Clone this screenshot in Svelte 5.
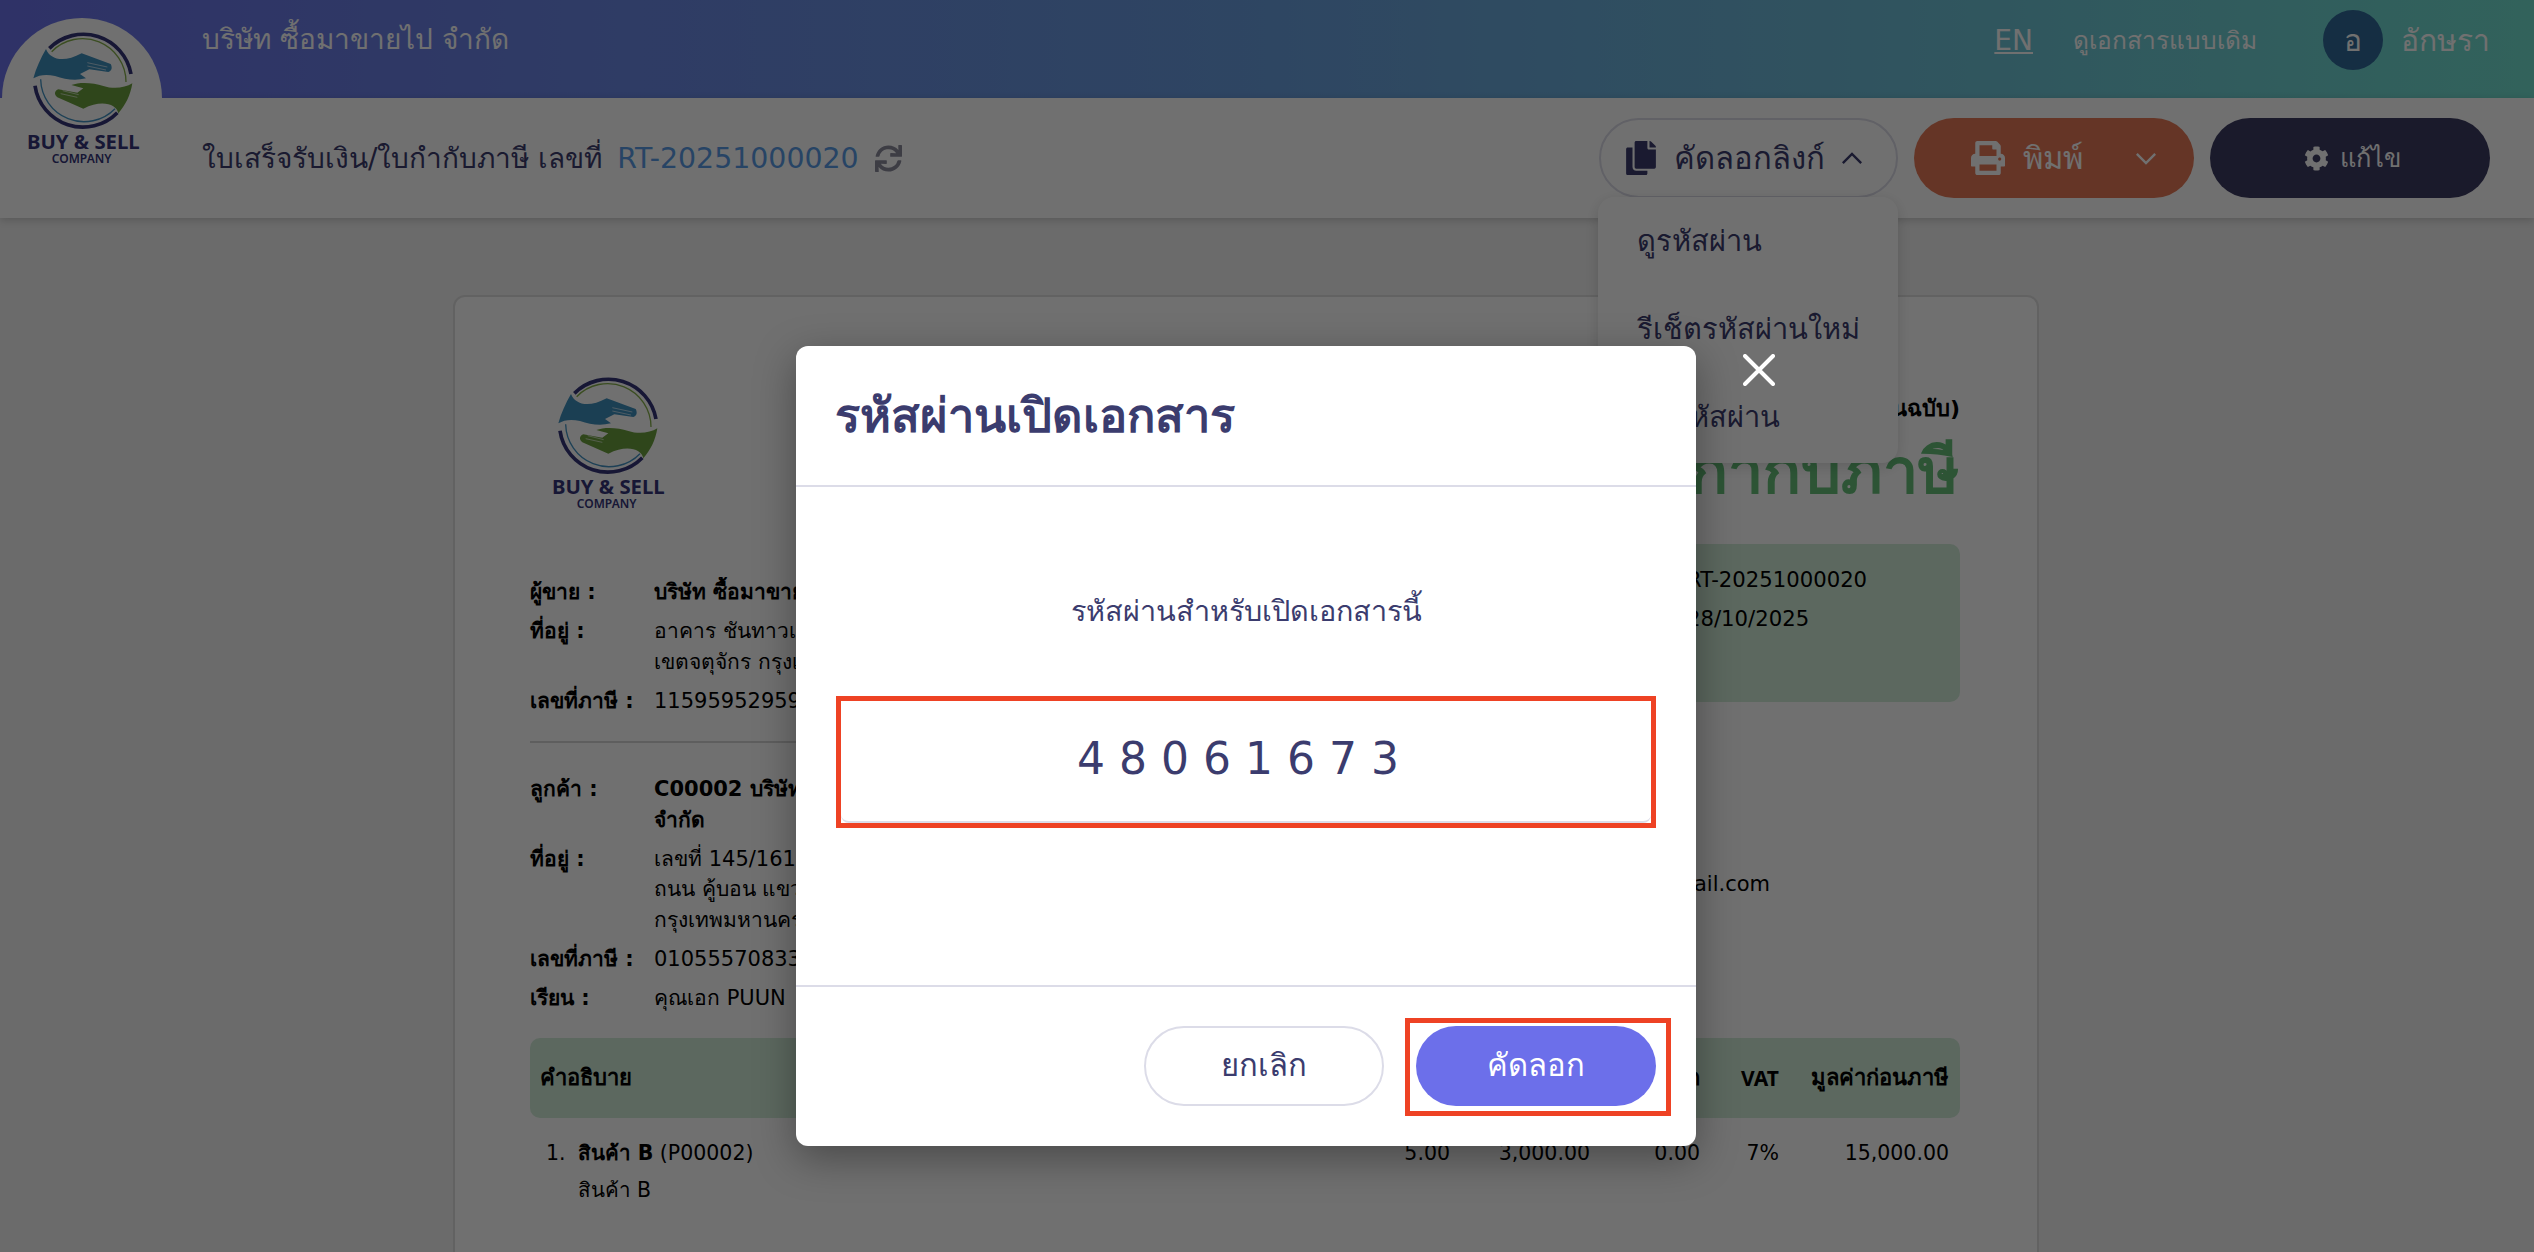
<script>
  const sellerRows = [
    { label: 'ผู้ขาย :', lines: ['บริษัท ซื้อมาขายไป จำกัด'], bold: true },
    { label: 'ที่อยู่ :', lines: ['อาคาร ชันทาวเวอร์ ถนนวิภาวดีรังสิต', 'เขตจตุจักร กรุงเทพมหานคร 10900'] },
    { label: 'เลขที่ภาษี :', lines: ['1159595295912'] }
  ];
  const buyerRows = [
    { label: 'ลูกค้า :', lines: ['C00002 บริษัท ทดสอบการขาย', 'จำกัด'], bold: true },
    { label: 'ที่อยู่ :', lines: ['เลขที่ 145/161 หมู่บ้านทดสอบ', 'ถนน คู้บอน  แขวงรามอินทรา', 'กรุงเทพมหานคร 10230'] },
    { label: 'เลขที่ภาษี :', lines: ['0105557083312'] },
    { label: 'เรียน :', lines: ['คุณเอก PUUN'] }
  ];
</script>

{#snippet logo()}
  <svg class="logo" viewBox="0 0 600 570" aria-label="Buy and Sell Company">
    <path d="M148 145A145 145 0 0 1 393 222" class="ring dark" />
    <path d="M105 257A145 145 0 0 0 352 338" class="ring dark" />
    <path d="M155 155A130 130 0 0 1 378 246" class="ring thin green" />
    <path d="M122 238A130 130 0 0 0 345 326" class="ring thin blue" />
    <path d="M100 235C108 205 122 175 138 147C150 178 190 190 245 160L332 192C338 203 335 213 325 216L268 208L240 222L258 235C225 243 195 238 165 228C140 222 118 224 100 235Z" fill="#3f8fbd" />
    <path d="M397 250C392 285 375 318 355 340C350 312 305 298 250 326L172 292C160 282 165 272 175 268L232 278L250 265L214 255C240 245 280 248 310 258C340 268 375 264 397 250Z" fill="#6ba03e" />
    <path d="M262 188L322 201M262 198L318 210M182 281L232 292M188 272L236 284" class="fingers" />
    <text x="250" y="447" text-anchor="middle" class="l1">BUY &amp; SELL</text>
    <text x="245" y="489" text-anchor="middle" class="l2">COMPANY</text>
  </svg>
{/snippet}

{#snippet infoRow(row)}
  <div class="info-row">
    <span class="info-label">{row.label}</span>
    <span class="info-value" class:strong={row.bold}>
      {#each row.lines as line}<span class="line">{line}</span>{/each}
    </span>
  </div>
{/snippet}

<div class="screen">
  <header class="topbar">
    <div class="company">บริษัท ซื้อมาขายไป จำกัด</div>
    <div class="top-right">
      <a class="lang" href="#en">EN</a>
      <span class="old-doc">ดูเอกสารแบบเดิม</span>
      <span class="avatar">อ</span>
      <span class="user">อักษรา</span>
    </div>
  </header>

  <div class="logo-badge">{@render logo()}</div>

  <section class="subbar">
    <div class="doc-title">
      <span>ใบเสร็จรับเงิน/ใบกำกับภาษี เลขที่</span>
      <span class="doc-no">RT-20251000020</span>
      <svg class="sync" viewBox="0 0 512 512"><path d="M440.65 12.57l4 82.77A247.16 247.16 0 0 0 255.83 8C134.73 8 33.91 94.92 12.29 209.82A12 12 0 0 0 24.09 224h49.05a12 12 0 0 0 11.67-9.26 175.91 175.91 0 0 1 317-56.94l-101.46-4.86a12 12 0 0 0-12.57 12v47.41a12 12 0 0 0 12 12H500a12 12 0 0 0 12-12V12a12 12 0 0 0-12-12h-47.37a12 12 0 0 0-11.98 12.57zM255.83 432a175.61 175.61 0 0 1-146-77.8l101.8 4.87a12 12 0 0 0 12.57-12v-47.4a12 12 0 0 0-12-12H12a12 12 0 0 0-12 12V500a12 12 0 0 0 12 12h47.35a12 12 0 0 0 12-12.6l-4.15-82.57A247.17 247.17 0 0 0 255.83 504c121.11 0 221.93-86.92 243.55-201.82a12 12 0 0 0-11.8-14.18h-49.05a12 12 0 0 0-11.67 9.26A175.86 175.86 0 0 1 255.83 432z"/></svg>
    </div>
    <div class="actions">
      <div class="copy-wrap">
        <button class="btn copy-link">
          <svg class="ic-copy" viewBox="0 0 448 512"><path d="M320 448v40c0 13.255-10.745 24-24 24H24c-13.255 0-24-10.745-24-24V120c0-13.255 10.745-24 24-24h72v296c0 30.879 25.121 56 56 56h168zm0-344V0H152c-13.255 0-24 10.745-24 24v368c0 13.255 10.745 24 24 24h272c13.255 0 24-10.745 24-24V128H344c-13.2 0-24-10.8-24-24zm120.971-31.029L375.029 7.029A24 24 0 0 0 358.059 0H352v96h96v-6.059a24 24 0 0 0-7.029-16.97z"/></svg>
          <span>คัดลอกลิงก์</span>
          <svg class="chev" viewBox="0 0 24 14"><path d="M2 12L12 2L22 12"/></svg>
        </button>
        <div class="dropdown">
          <div class="dd-item">ดูรหัสผ่าน</div>
          <div class="dd-item">รีเช็ตรหัสผ่านใหม่</div>
          <div class="dd-item">ปิดรหัสผ่าน</div>
        </div>
      </div>
      <button class="btn print">
        <svg class="ic-print" viewBox="0 0 512 512"><path d="M448 192V77.25c0-8.49-3.37-16.62-9.37-22.63L393.37 9.37c-6-6-14.14-9.37-22.63-9.37H96C78.33 0 64 14.33 64 32v160c-35.35 0-64 28.65-64 64v112c0 8.84 7.16 16 16 16h48v96c0 17.67 14.33 32 32 32h320c17.67 0 32-14.33 32-32v-96h48c8.84 0 16-7.16 16-16V256c0-35.35-28.65-64-64-64zm-64 256H128v-96h256v96zm0-224H128V64h192v48c0 8.84 7.16 16 16 16h48v96zm48 72c-13.25 0-24-10.75-24-24 0-13.26 10.75-24 24-24s24 10.74 24 24c0 13.25-10.75 24-24 24z"/></svg>
        <span>พิมพ์</span>
        <svg class="chev down" viewBox="0 0 24 14"><path d="M2 2L12 12L22 2"/></svg>
      </button>
      <button class="btn edit">
        <svg class="ic-cog" viewBox="0 0 512 512"><path d="M487.4 315.7l-42.6-24.6c4.3-23.2 4.3-47 0-70.2l42.6-24.6c4.9-2.8 7.1-8.6 5.5-14-11.1-35.6-30-67.8-54.7-94.6-3.8-4.1-10-5.1-14.8-2.3L380.8 110c-17.9-15.4-38.5-27.3-60.8-35.1V25.8c0-5.6-3.9-10.5-9.4-11.7-36.7-8.2-74.3-7.8-109.2 0-5.5 1.2-9.4 6.1-9.4 11.7V75c-22.2 7.9-42.8 19.8-60.8 35.1L88.7 85.5c-4.9-2.8-11-1.9-14.8 2.3-24.7 26.7-43.6 58.9-54.7 94.6-1.7 5.4.6 11.2 5.5 14L67.3 221c-4.3 23.2-4.3 47 0 70.2l-42.6 24.6c-4.9 2.8-7.1 8.6-5.5 14 11.1 35.6 30 67.8 54.7 94.6 3.8 4.1 10 5.1 14.8 2.3l42.6-24.6c17.9 15.4 38.5 27.3 60.8 35.1v49.2c0 5.6 3.9 10.5 9.4 11.7 36.7 8.2 74.3 7.8 109.2 0 5.5-1.2 9.4-6.1 9.4-11.7v-49.2c22.2-7.9 42.8-19.8 60.8-35.1l42.6 24.6c4.9 2.8 11 1.9 14.8-2.3 24.7-26.7 43.6-58.9 54.7-94.6 1.5-5.5-.7-11.3-5.6-14.1zM256 336c-44.1 0-80-35.9-80-80s35.9-80 80-80 80 35.9 80 80-35.9 80-80 80z"/></svg>
        <span>แก้ไข</span>
      </button>
    </div>
  </section>

  <main class="content">
    <article class="card">
      <div class="doc-head">
        <div class="doc-left">
          {@render logo()}
          <div class="info first">
            {#each sellerRows as r}{@render infoRow(r)}{/each}
          </div>
          <hr />
          <div class="info">
            {#each buyerRows as r}{@render infoRow(r)}{/each}
          </div>
        </div>
        <div class="doc-right">
          <div class="original">(ต้นฉบับ)</div>
          <div class="big-title">ใบเสร็จรับเงิน/ใบกำกับภาษี</div>
          <div class="meta">
            <div class="meta-row"><span class="meta-label">เลขที่ :</span><span>RT-20251000020</span></div>
            <div class="meta-row"><span class="meta-label">วันที่ :</span><span>28/10/2025</span></div>
          </div>
          <div class="contact"><span>อีเมล : test@gmail.com</span></div>
        </div>
      </div>
      <div class="table-head">
        <span class="c-desc">คำอธิบาย</span>
        <span class="c-qty">จำนวน</span>
        <span class="c-price">ราคา</span>
        <span class="c-disc">ส่วนลด</span>
        <span class="c-vat latin">VAT</span>
        <span class="c-total">มูลค่าก่อนภาษี</span>
      </div>
      <div class="table-row">
        <span class="c-desc item">
          <span class="num">1.</span>
          <span><span class="line"><b>สินค้า B</b> (P00002)</span><span class="line">สินค้า B</span></span>
        </span>
        <span class="c-qty">5.00</span>
        <span class="c-price">3,000.00</span>
        <span class="c-disc">0.00</span>
        <span class="c-vat">7%</span>
        <span class="c-total">15,000.00</span>
      </div>
    </article>
  </main>

  <div class="backdrop"></div>
  <svg class="close" viewBox="0 0 32 32"><path d="M2 2L30 30M30 2L2 30"/></svg>

  <div class="modal">
    <div class="modal-head">รหัสผ่านเปิดเอกสาร</div>
    <div class="modal-body">
      <p class="pw-label">รหัสผ่านสำหรับเปิดเอกสารนี้</p>
      <div class="pw-box">
        <div class="pw-value">4 8 0 6 1 6 7 3</div>
      </div>
    </div>
    <div class="modal-foot">
      <button class="m-btn cancel">ยกเลิก</button>
      <span class="red-mark"><button class="m-btn confirm">คัดลอก</button></span>
    </div>
  </div>
</div>

<style>
  :global(body) { margin: 0; background: #f2f2f2; }
  .screen {
    position: relative;
    width: 2534px;
    height: 1252px;
    overflow: hidden;
    background: #f3f3f3;
    font-family: "DejaVu Sans", "Noto Sans", sans-serif;
    color: #3b3c6e;
  }
  .topbar {
    height: 98px;
    box-sizing: border-box;
    padding: 12px 44px 0 202px;
    display: flex;
    justify-content: space-between;
    align-items: flex-start;
    background: linear-gradient(90deg, #6c72ea 0%, #6a9fe0 50%, #72e0d0 100%);
    color: #fff;
  }
  .company { font-size: 28px; line-height: 50px; padding-top: 3px; }
  .top-right { display: flex; align-items: center; height: 56px; }
  .lang { color: #fff; font-size: 28px; text-decoration: underline; margin-right: 40px; }
  .old-doc { font-size: 24.5px; margin-right: 66px; }
  .avatar {
    width: 60px; height: 60px; border-radius: 50%;
    background: #306a98;
    display: flex; align-items: center; justify-content: center;
    font-size: 30px; margin-right: 18px;
  }
  .user { font-size: 30px; }
  .logo-badge {
    position: absolute; left: 2px; top: 18px; z-index: 2;
    width: 160px; height: 160px; border-radius: 50%;
    background: #fff;
  }
  .logo { display: block; width: 200px; height: 190px; fill: none; }
  .logo-badge .logo { margin: -18px 0 0 -2px; }
  .ring { fill: none; }
  .dark { stroke: #35357a; stroke-width: 11; }
  .thin { stroke-width: 4; }
  .green { stroke: #86b04c; }
  .blue { stroke: #4393c4; }
  .fingers { fill: none; stroke: #fff; stroke-width: 2.5; opacity: .7; }
  .l1 { font: 700 61px "Noto Sans", sans-serif; fill: #35357a; }
  .l2 { font: 600 36px "Noto Sans", sans-serif; fill: #35357a; }

  .subbar {
    height: 120px;
    box-sizing: border-box;
    padding: 20px 44px 0 202px;
    display: flex;
    justify-content: space-between;
    background: #fff;
    box-shadow: 0 2px 8px rgba(0,0,0,.18);
    position: relative;
  }
  .doc-title { display: flex; align-items: center; height: 80px; font-size: 28px; color: #3b3c6e; }
  .doc-no { color: #5a9be6; margin-left: 15px; font-size: 28.4px; }
  .sync { width: 27px; height: 27px; fill: #8b8b9c; margin-left: 16px; }
  .actions { display: flex; gap: 16px; align-items: flex-start; }
  .btn {
    width: 280px; height: 80px; border-radius: 40px; border: 0;
    display: flex; align-items: center; justify-content: center;
    font: 31px "DejaVu Sans", "Noto Sans", sans-serif;
    padding: 0;
  }
  .copy-wrap { position: relative; z-index: 3; }
  .copy-link {
    width: 299px; background: #fff; color: #3b3c6e;
    border: 2px solid #dcdce8; box-sizing: border-box;
    padding-right: 9px;
  }
  .ic-copy { width: 30px; height: 34px; fill: #3b3c6e; margin-right: 18px; }
  .chev { width: 22px; height: 13px; fill: none; stroke: currentColor; stroke-width: 2.6; margin-left: 16px; }
  .dropdown {
    position: absolute; left: -1px; top: 79px;
    width: 300px; height: 266px;
    border-radius: 16px;
    background: #fff;
    box-shadow: 0 4px 14px rgba(0,0,0,.14);
    box-sizing: border-box;
    padding: 0 39px;
  }
  .dd-item { height: 88px; line-height: 88px; font-size: 29px; color: #3b3c6e; white-space: nowrap; }
  .print { background: #e67a58; color: #fff; padding-left: 20px; }
  .ic-print { width: 34px; height: 34px; fill: #fff; margin-right: 18px; }
  .print .down { margin-left: 52px; }
  .edit { background: #3d3b62; color: #fff; font-size: 25.5px; padding-left: 4px; }
  .ic-cog { width: 25px; height: 27px; fill: #fff; margin-right: 11px; }

  .content { padding: 77px 0 0 453px; }
  .card {
    width: 1586px; height: 1100px;
    box-sizing: border-box;
    padding: 48px 77px 0 75px;
    background: #fff;
    border: 2px solid #dfdfdf;
    border-radius: 12px;
    color: #000;
    font-size: 20.5px;
  }
  .doc-head { display: flex; justify-content: space-between; }
  .doc-left { width: 660px; }
  .doc-left .logo { margin-left: -5px; }
  .info-row { display: flex; margin-bottom: 8.5px; line-height: 30.5px; font-size: 21px; }
  .info.first { margin-top: 42px; }
  .info-label { width: 124px; font-weight: 700; flex: none; white-space: nowrap; }
  .info-value { flex: 1; white-space: nowrap; overflow: hidden; }
  .strong { font-weight: 700; }
  .line { display: block; }
  hr { border: 0; border-top: 2px solid #d5d5d5; margin: 25px 0 31px; }
  .doc-right { width: 500px; text-align: right; padding-top: 46px; }
  .original { font-size: 22px; font-weight: 700; line-height: 36px; }
  .big-title { font-size: 63px; font-weight: 700; color: #66c07a; line-height: 90px; white-space: nowrap; direction: rtl; }
  .meta {
    margin-top: 27px; height: 158px; box-sizing: border-box;
    background: #d2ecd9; border-radius: 10px; padding: 16px 20px; text-align: left;
  }
  .meta-row { display: flex; line-height: 39px; font-size: 21.2px; }
  .meta-label { width: 207px; flex: none; }
  .contact { margin-top: 165px; width: 310px; text-align: right; font-size: 21px; white-space: nowrap; }
  .table-head, .table-row { display: flex; align-items: center; padding-right: 11px; }
  .table-head {
    height: 80px; margin-top: 16px;
    background: #d2ecd9; border-radius: 10px;
    font-weight: 700; font-size: 22px;
  }
  .table-row { align-items: flex-start; padding-top: 17px; line-height: 37px; font-size: 20.5px; }
  .latin { font-family: "Noto Sans", sans-serif; font-size: 21px; }
  .c-desc { width: 730px; padding-left: 10px; box-sizing: border-box; }
  .c-qty { width: 190px; text-align: right; }
  .c-price { width: 140px; text-align: right; }
  .c-disc { width: 110px; text-align: right; }
  .c-vat { width: 79px; text-align: right; }
  .c-total { width: 170px; text-align: right; }
  .item { display: flex; gap: 12px; padding-left: 16px; }

  .backdrop { position: absolute; inset: 0; background: rgba(0,0,0,.56); z-index: 10; }
  .close {
    position: absolute; left: 1743px; top: 354px; width: 32px; height: 32px; z-index: 11;
    fill: none; stroke: #fff; stroke-width: 4; stroke-linecap: round;
  }
  .modal {
    position: absolute; left: 796px; top: 346px; width: 900px; height: 800px;
    background: #fff; border-radius: 12px; z-index: 11;
    box-shadow: 0 12px 40px rgba(0,0,0,.35);
    display: flex; flex-direction: column;
  }
  .modal-head {
    height: 141px; flex: none; box-sizing: border-box; padding: 0 39px;
    display: flex; align-items: center;
    font-size: 47px; font-weight: 700; color: #3b3c6e;
    border-bottom: 2px solid #dcdce8;
  }
  .modal-body { flex: 1; padding: 0 40px; text-align: center; }
  .pw-label { margin: 100px 0 0; font-size: 28.8px; line-height: 48px; }
  .pw-box {
    margin: 61px 0 0; height: 132px; box-sizing: border-box;
    outline: 5px solid #ee4224; outline-offset: -5px;
    padding: 5px;
  }
  .pw-value {
    height: 122px; line-height: 116px; font-size: 44px; padding-right: 16px; box-sizing: border-box;
    border-bottom: 2px solid #dcdce8; border-radius: 0 0 8px 8px;
  }
  .modal-foot {
    height: 161px; flex: none; box-sizing: border-box;
    border-top: 2px solid #dcdce8;
    display: flex; justify-content: flex-end; align-items: flex-start;
    padding: 31px 25px 0 0;
    gap: 21px;
  }
  .m-btn {
    width: 240px; height: 80px; border-radius: 40px; padding: 0 0 3px;
    font: 31px "DejaVu Sans", "Noto Sans", sans-serif;
  }
  .cancel { background: #fff; border: 2px solid #dcdce8; color: #3b3c6e; margin-top: 8px; }
  .confirm { background: #6c6fea; border: 0; color: #fff; display: block; }
  .red-mark { display: block; border: 5px solid #ee4224; padding: 3px 10px 5px 6px; }
</style>
